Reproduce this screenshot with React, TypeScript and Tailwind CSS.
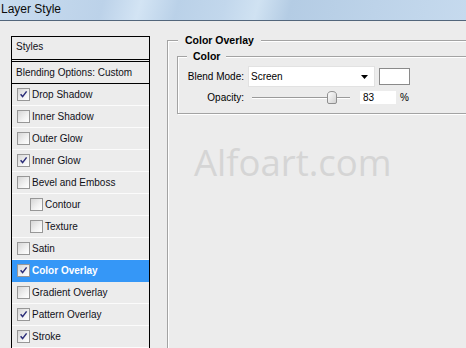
import React from 'react';

type StyleItem = {
  label: string;
  checked: boolean;
  indent?: boolean;
  selected?: boolean;
};

const items: StyleItem[] = [
  { label: 'Drop Shadow', checked: true },
  { label: 'Inner Shadow', checked: false },
  { label: 'Outer Glow', checked: false },
  { label: 'Inner Glow', checked: true },
  { label: 'Bevel and Emboss', checked: false },
  { label: 'Contour', checked: false, indent: true },
  { label: 'Texture', checked: false, indent: true },
  { label: 'Satin', checked: false },
  { label: 'Color Overlay', checked: true, selected: true },
  { label: 'Gradient Overlay', checked: false },
  { label: 'Pattern Overlay', checked: true },
  { label: 'Stroke', checked: true },
];

const CheckBox: React.FC<{ checked: boolean }> = ({ checked }) => (
  <div className="w-[13px] h-[13px] shrink-0 border border-[#979797] bg-[linear-gradient(135deg,#d6d6d6,#f2f2f2_60%,#ffffff)] flex items-center justify-center">
    {checked && (
      <svg width="9" height="9" viewBox="0 0 9 9">
        <path d="M1.6 4.3 L3.6 6.6 L7.6 1.4" fill="none" stroke="#2a2c78" strokeWidth="1.5" />
      </svg>
    )}
  </div>
);

const StyleRow: React.FC<{ item: StyleItem }> = ({ item }) => (
  <div
    className={`h-[22px] flex items-center gap-[2px] border-b ${
      item.selected ? 'bg-[#3597f7] border-[#3597f7] text-white font-bold' : 'border-[#fbfbfb] text-[#101018]'
    } ${item.indent ? 'pl-[18px]' : 'pl-[5px]'}`}
  >
    <CheckBox checked={item.checked} />
    <span className="whitespace-nowrap">{item.label}</span>
  </div>
);

export default function App() {
  return (
    <div className="w-[466px] h-[348px] overflow-hidden bg-[#ececec] relative font-['Liberation_Sans',Arial,sans-serif] text-[10px] text-black">
      {/* title bar */}
      <div className="h-[21px] border-b border-[#52667b] bg-[linear-gradient(105deg,#c9dcef_0%,#bcd2e9_22%,#d3e4f4_30%,#bad1e8_38%,#c2d7ec_48%,#d0e2f2_55%,#b4cce4_62%,#bdd3e9_80%,#c6daee_100%)]">
        <div className="pl-[1px] text-[12px] leading-[19px] text-[#0c0c0c]">Layer Style</div>
      </div>

      <div className="flex pt-[15px]">
        {/* styles list */}
        <div className="ml-[11px] w-[139px] h-[340px] shrink-0 border border-b-0 border-black">
          <div className="h-[18px] pt-[4px] pl-[4px] leading-[12px] text-[#101018] border-b-[3px] border-double border-black box-content">
            Styles
          </div>
          <div className="h-[22px] flex items-center pl-[4px] text-[#101018] border-b border-black">
            Blending Options: Custom
          </div>
          {items.map((item) => (
            <StyleRow key={item.label} item={item} />
          ))}
        </div>

        {/* settings */}
        <fieldset className="ml-[17px] mt-[-2px] w-[330px] h-[360px] shrink-0 border border-[#a3a3a3] shadow-[inset_1px_1px_0_#ffffff]">
          <legend className="ml-[10px] px-[7px] font-bold text-[10.5px] leading-[12px] bg-[#ececec]">Color Overlay</legend>
          <fieldset className="ml-[9px] mt-[4px] h-[64px] border border-[#a3a3a3] shadow-[inset_1px_1px_0_#ffffff,1px_1px_0_#ffffff]">
            <legend className="ml-[9px] px-[6px] font-bold text-[10.5px] leading-[12px] bg-[#ececec]">Color</legend>
            <div className="flex items-center mt-[4px] h-[21px]">
              <div className="w-[66px] text-right">Blend Mode:</div>
              <div className="ml-[4px] w-[127px] h-[21px] bg-white border border-[#e2e2e2] flex items-center justify-between pl-[2px] pr-[6px]">
                <span>Screen</span>
                <svg width="7" height="4" viewBox="0 0 7 4">
                  <path d="M0 0 H7 L3.5 4 Z" fill="#000" />
                </svg>
              </div>
              <div className="ml-[4px] w-[31px] h-[17px] bg-white border border-[#8a8a8a]" />
            </div>
            <div className="flex items-center mt-[3px] h-[15px]">
              <div className="w-[66px] text-right">Opacity:</div>
              <div className="ml-[8px] w-[98px] h-[14px] relative flex items-center">
                <div className="w-full h-[2px] border-t border-[#9a9a9a] border-b border-b-white" />
                <svg className="absolute left-[75px] top-[0px]" width="10" height="13" viewBox="0 0 10 13">
                  <defs>
                    <linearGradient id="thumb" x1="0" y1="0" x2="1" y2="1">
                      <stop offset="0" stopColor="#ffffff" />
                      <stop offset="1" stopColor="#cfcfcf" />
                    </linearGradient>
                  </defs>
                  <path d="M0.5 4 Q0.5 0.5 5 0.5 Q9.5 0.5 9.5 4 V11 Q9.5 12.5 8 12.5 H2 Q0.5 12.5 0.5 11 Z" fill="url(#thumb)" stroke="#8f8f8f" />
                </svg>
              </div>
              <div className="ml-[9px] w-[38px] h-[15px] bg-white border border-[#ececec] pl-[3px] leading-[13px]">83</div>
              <div className="ml-[3px]">%</div>
            </div>
          </fieldset>
        </fieldset>
      </div>

      {/* watermark */}
      <div className="absolute left-[194px] top-[140px] font-['Open_Sans',sans-serif] text-[36.5px] leading-[44px] text-[#d5d5d5] select-none">
        Alfoart.com
      </div>
    </div>
  );
}
